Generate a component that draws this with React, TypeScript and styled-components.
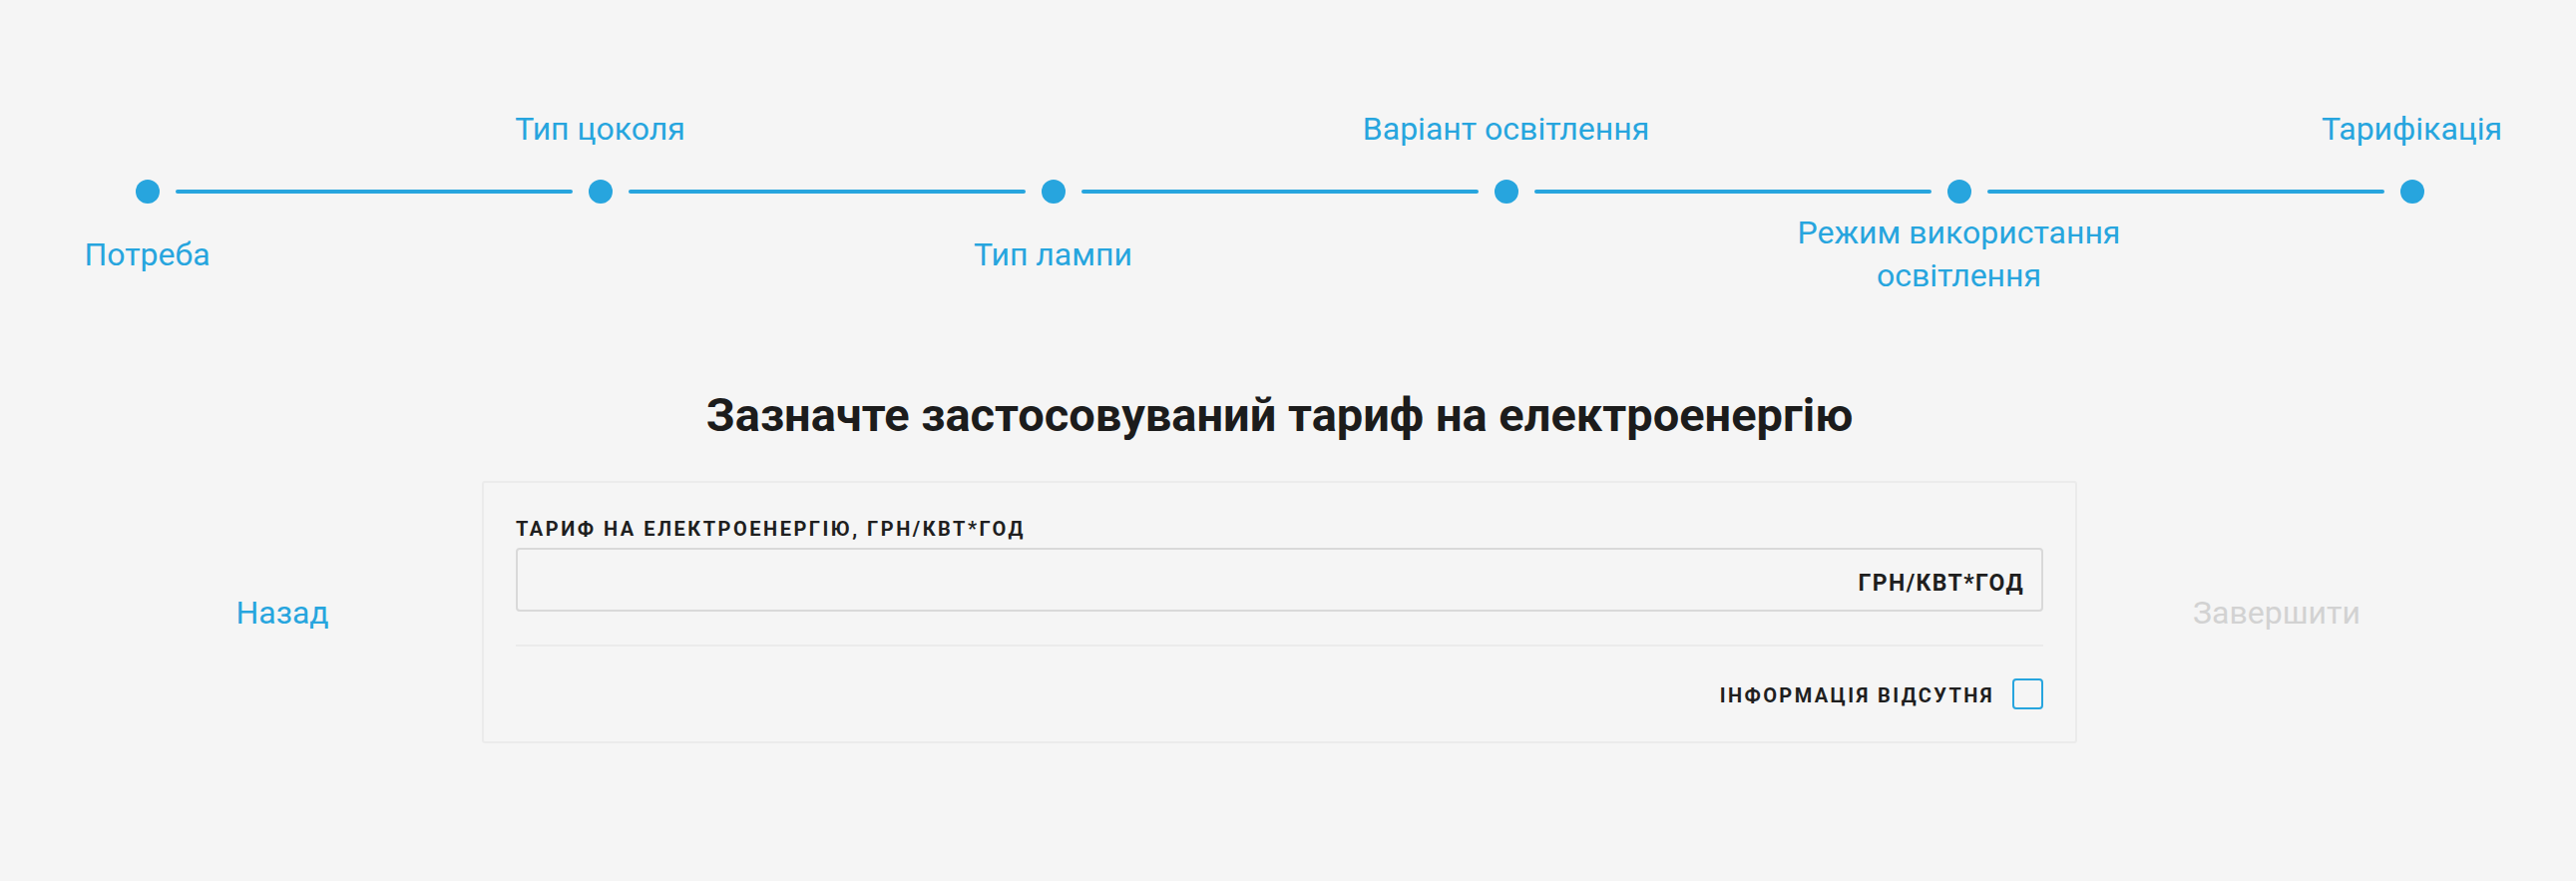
import React from 'react';
import styled, { createGlobalStyle } from 'styled-components';

const BLUE = '#27a5de';

const GlobalStyle = createGlobalStyle`
  html, body {
    margin: 0;
    padding: 0;
    background: #f5f5f5;
  }
  body {
    font-family: Roboto, 'Noto Sans', sans-serif;
    min-height: 883px;
  }
  * {
    box-sizing: border-box;
  }
`;

const steps = [
  { title: ['Потреба'], place: 'bottom' },
  { title: ['Тип цоколя'], place: 'top' },
  { title: ['Тип лампи'], place: 'bottom' },
  { title: ['Варіант освітлення'], place: 'top' },
  { title: ['Режим використання', 'освітлення'], place: 'bottom' },
  { title: ['Тарифікація'], place: 'top' },
];

function StepLabelText({ lines }: { lines: string[] }) {
  return (
    <StepLabel>
      {lines.map((line, i) => (
        <React.Fragment key={line}>
          {i > 0 && <br />}
          {line}
        </React.Fragment>
      ))}
    </StepLabel>
  );
}

function App() {
  return (
    <>
      <GlobalStyle />
      <Page>
        <Stepper>
          {steps.map((step, i) => (
            <React.Fragment key={step.title.join(' ')}>
              {i > 0 && <Connector />}
              <Step>
                <LabelSlot>{step.place === 'top' && <StepLabelText lines={step.title} />}</LabelSlot>
                <Dot />
                <LabelSlot>{step.place === 'bottom' && <StepLabelText lines={step.title} />}</LabelSlot>
              </Step>
            </React.Fragment>
          ))}
        </Stepper>

        <Title>Зазначте застосовуваний тариф на електроенергію</Title>

        <NavRow>
          <NavButton $color={BLUE}>Назад</NavButton>
          <Card>
            <FieldLabel>Тариф на електроенергію, грн/кВт*год</FieldLabel>
            <InputBox>
              <TextInput type="text" />
              <Suffix>грн/кВт*год</Suffix>
            </InputBox>
            <Divider />
            <CheckRow>
              <CheckText>Інформація відсутня</CheckText>
              <CheckBox type="checkbox" />
            </CheckRow>
          </Card>
          <NavButton $color="#d2d2d2" disabled>
            Завершити
          </NavButton>
        </NavRow>
      </Page>
    </>
  );
}

const Page = styled.div`
  padding: 86px 17px 0 0;
`;

const Stepper = styled.div`
  width: 2294px;
  margin: 0 auto;
  display: flex;
  align-items: center;
`;

const Step = styled.div`
  width: 24px;
  display: flex;
  flex-direction: column;
  align-items: center;
  gap: 8px;
`;

const LabelSlot = styled.div`
  height: 86px;
  display: flex;
  align-items: center;
  justify-content: center;
`;

const StepLabel = styled.span`
  font-size: 32px;
  line-height: 43px;
  color: ${BLUE};
  white-space: nowrap;
  text-align: center;
`;

const Dot = styled.span`
  width: 24px;
  height: 24px;
  border-radius: 50%;
  background: ${BLUE};
  flex-shrink: 0;
`;

const Connector = styled.span`
  flex: 1;
  height: 4px;
  margin: 0 16px;
  border-radius: 2px;
  background: ${BLUE};
`;

const Title = styled.h1`
  margin: 91px 0 40px;
  text-align: center;
  font-size: 47px;
  line-height: 53px;
  font-weight: 700;
  color: #1c1c1c;
`;

const NavRow = styled.div`
  width: 2399px;
  margin: 0 auto;
  display: flex;
  align-items: center;
`;

const NavButton = styled.button<{ $color: string }>`
  width: 400px;
  flex-shrink: 0;
  padding: 0;
  border: none;
  background: none;
  font-family: Roboto, sans-serif;
  font-size: 32px;
  color: ${(p) => p.$color};
  text-align: center;
  cursor: pointer;
  &:disabled {
    cursor: default;
  }
`;

const Card = styled.div`
  width: 1599px;
  flex-shrink: 0;
  padding: 32px;
  border: 2px solid #ebebeb;
  border-radius: 3px;
  display: flex;
  flex-direction: column;
`;

const FieldLabel = styled.label`
  display: block;
  font-size: 20px;
  line-height: 28px;
  font-weight: 700;
  letter-spacing: 2.5px;
  text-transform: uppercase;
  color: #1f1f1f;
  margin-bottom: 5px;
`;

const InputBox = styled.div`
  height: 64px;
  display: flex;
  align-items: center;
  padding: 6px 18px 0 20px;
  border: 2px solid #d9d9d9;
  border-radius: 4px;
`;

const TextInput = styled.input`
  flex: 1;
  min-width: 0;
  height: 100%;
  border: none;
  background: transparent;
  outline: none;
  font-family: Roboto, sans-serif;
  font-size: 22px;
`;

const Suffix = styled.span`
  font-size: 23px;
  font-weight: 700;
  letter-spacing: 1.4px;
  margin-right: -1px;
  text-transform: uppercase;
  color: #1f1f1f;
`;

const Divider = styled.hr`
  margin: 33px 0 32px;
  border: none;
  height: 2px;
  background: #ebebeb;
`;

const CheckRow = styled.div`
  display: flex;
  align-items: center;
  justify-content: flex-end;
  gap: 18px;
`;

const CheckText = styled.span`
  font-size: 20px;
  line-height: 24px;
  padding-top: 3px;
  font-weight: 700;
  letter-spacing: 2.4px;
  text-transform: uppercase;
  color: #1f1f1f;
`;

const CheckBox = styled.input`
  appearance: none;
  margin: 0;
  width: 31px;
  height: 31px;
  border: 2px solid ${BLUE};
  border-radius: 4px;
  background: transparent;
  cursor: pointer;
`;

export default App;
